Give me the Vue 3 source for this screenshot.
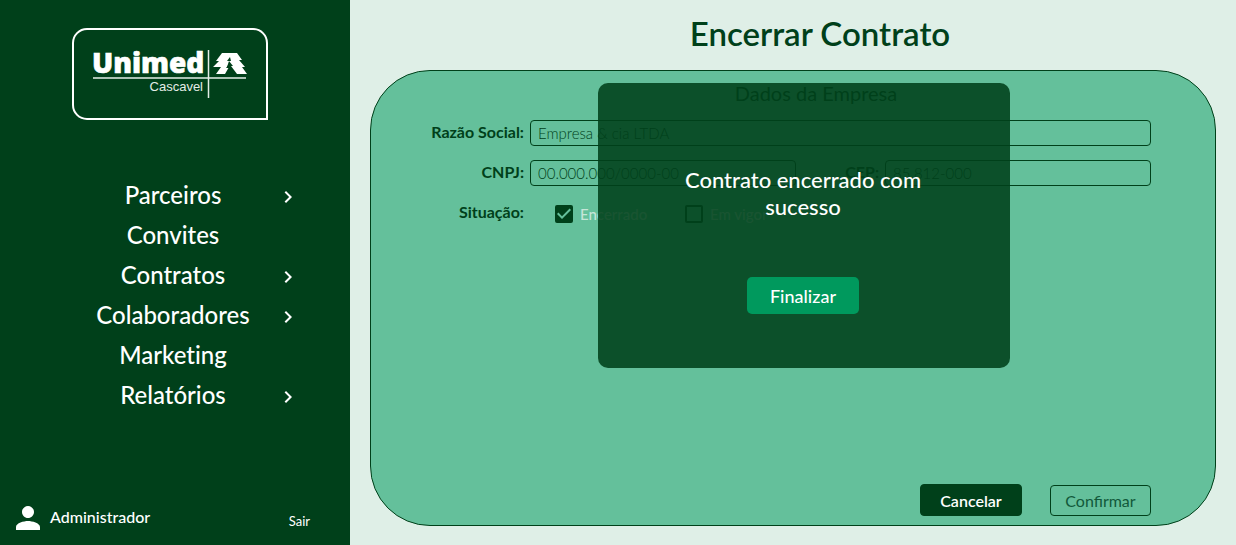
<script setup>
import { ref } from 'vue'

const menu = [
  { label: 'Parceiros', expandable: true },
  { label: 'Convites', expandable: false },
  { label: 'Contratos', expandable: true },
  { label: 'Colaboradores', expandable: true },
  { label: 'Marketing', expandable: false },
  { label: 'Relatórios', expandable: true },
]
const company = ref('Empresa & cia LTDA')
const cnpj = ref('00.000.000/0000-00')
const cep = ref('85.812-000')
const closed = ref(true)
const active = ref(false)
</script>

<template>
  <div class="page">
    <aside class="sidebar">
      <svg class="logo" width="196" height="92" viewBox="0 0 196 92" role="img" aria-label="Unimed Cascavel">
        <path d="M15 1H181A14 14 0 0 1 195 15V91H15A14 14 0 0 1 1 77V15A14 14 0 0 1 15 1Z" fill="none" stroke="#fff" stroke-width="2" />
        <text x="20" y="45" class="logo-name">Unimed</text>
        <text x="131" y="63" text-anchor="end" class="logo-city">Cascavel</text>
        <path d="M21 50H174M136.500 22V70" fill="none" stroke="#e4ede7" stroke-width="1.500" />
        <path d="M150 25H165L170 32H167L173 39H170L175 46H165L159 38H161L157 33L155 39H157L153 46H144L149 39H141L147 33H144Z" fill="#fff" />
        <path d="M158 29L155 33H159ZM157 36L154 40H159Z" fill="#00401a" />
      </svg>
      <nav>
        <ul class="menu">
          <li v-for="item in menu" :key="item.label">
            <a href="#">{{ item.label }}</a>
            <button v-if="item.expandable" type="button" :aria-label="`Abrir ${item.label}`">
              <svg width="24" height="24" viewBox="0 0 24 24"><path fill="#fff" d="M10 6 8.590 7.410 13.170 12l-4.580 4.590L10 18l6-6z" /></svg>
            </button>
          </li>
        </ul>
      </nav>
      <footer class="user">
        <svg width="36" height="36" viewBox="0 0 24 24"><path fill="#fff" d="M12 12c2.210 0 4-1.790 4-4s-1.790-4-4-4-4 1.790-4 4 1.790 4 4 4zm0 2c-2.670 0-8 1.340-8 4v2h16v-2c0-2.660-5.330-4-8-4z" /></svg>
        <span class="user-name">Administrador</span>
        <a href="#" class="exit">Sair</a>
      </footer>
    </aside>

    <main class="main">
      <h1>Encerrar Contrato</h1>
      <section class="panel">
        <form class="form" @submit.prevent>
          <h2>Dados da Empresa</h2>
          <div class="fields">
            <label for="company">Razão Social:</label>
            <input id="company" v-model="company" class="wide" type="text" />
            <label for="cnpj">CNPJ:</label>
            <input id="cnpj" v-model="cnpj" type="text" />
            <label for="cep">CEP:</label>
            <input id="cep" v-model="cep" type="text" />
            <span id="status" class="caption">Situação:</span>
            <div class="checks wide" role="group" aria-labelledby="status">
              <label class="check">
                <input v-model="closed" type="checkbox" />
                <svg v-if="closed" width="18" height="18" viewBox="3 3 18 18"><path fill="#64c09b" d="M10 17l-5-5 1.410-1.410L10 14.170l7.590-7.590L19 8z" /></svg>
                <span>Encerrado</span>
              </label>
              <label class="check">
                <input v-model="active" type="checkbox" />
                <span>Em vigor</span>
              </label>
            </div>
          </div>
          <div class="actions">
            <button type="button" class="cancel">Cancelar</button>
            <button type="submit" class="confirm">Confirmar</button>
          </div>
        </form>
        <div class="modal" role="dialog" aria-labelledby="message">
          <p id="message">Contrato encerrado com sucesso</p>
          <button type="button">Finalizar</button>
        </div>
      </section>
    </main>
  </div>
</template>

<style>
body {
  background: #dfefe7;
}
</style>

<style scoped>
.page, .page * {
  box-sizing: border-box;
}
.page {
  display: flex;
  min-height: 100vh;
  font-family: Lato, sans-serif;
  font-size: 16px;
  color: #00401a;
}
button, input {
  font: inherit;
}
button {
  cursor: pointer;
}
.sidebar {
  flex: 0 0 350px;
  display: flex;
  flex-direction: column;
  background: #00401a;
  color: #fff;
}
.sidebar a {
  color: inherit;
  text-decoration: none;
}
.logo {
  margin: 28px 0 56px 72px;
}
.logo-name {
  font: 800 28px "Open Sans", sans-serif;
  fill: #fff;
  stroke: #fff;
  stroke-width: 0.6;
}
.logo-city {
  font: 13px "Liberation Sans", sans-serif;
  fill: #e4ede7;
}
.menu {
  margin: 0;
  padding: 0 50px 0 70px;
  list-style: none;
  font-variant-ligatures: none;
}
.menu li {
  display: flex;
  align-items: flex-start;
  height: 40px;
}
.menu a {
  flex: 0 0 206px;
  font-size: 24px;
  font-weight: 500;
  line-height: 38px;
  text-align: center;
}
.menu button {
  display: flex;
  padding: 9px 0 0;
  border: 0;
  background: none;
}
.user {
  display: flex;
  align-items: center;
  margin-top: auto;
  padding: 0 40px 9px 10px;
}
.user-name {
  margin-left: 4px;
  padding-bottom: 3px;
  font-weight: 500;
}
.exit {
  margin: 6px 0 0 auto;
  font-size: 13px;
}
.main {
  flex: 1;
  display: flex;
  flex-direction: column;
  min-width: 0;
  padding: 0 20px 19px;
}
h1 {
  margin: 0;
  padding: 0 0 4px 54px;
  font-size: 33px;
  font-weight: 600;
  line-height: 66px;
  text-align: center;
}
.panel {
  position: relative;
  flex: 1;
  display: flex;
  border: 1px solid #00401a;
  border-radius: 60px;
  background: #64c09b;
}
.form {
  flex: 1;
  display: flex;
  flex-direction: column;
  padding: 8px 64px 9px 48px;
}
h2 {
  margin: 0 0 13px;
  padding-left: 62px;
  font-size: 20px;
  font-weight: 400;
  line-height: 28px;
  text-align: center;
}
.fields {
  display: grid;
  grid-template-columns: 105px 1fr 77px 1fr;
  column-gap: 6px;
  row-gap: 14px;
}
.fields > label, .caption {
  font-weight: 700;
  line-height: 24px;
  text-align: right;
}
.wide {
  grid-column: 2 / -1;
}
.fields > input {
  width: 100%;
  min-width: 0;
  height: 26px;
  padding: 0 7px;
  border: 1px solid #00401a;
  border-radius: 4px;
  background: none;
  color: #00401a;
  font-size: 15px;
  font-weight: 300;
}
.checks {
  display: flex;
  height: 28px;
  padding-left: 25px;
}
.check {
  display: grid;
  grid-template-columns: 18px auto;
  align-items: center;
  column-gap: 7px;
  width: 130px;
  color: #dfefe7;
  font-size: 15px;
  font-weight: 500;
}
.check input {
  grid-area: 1 / 1;
  appearance: none;
  width: 18px;
  height: 18px;
  margin: 0;
  border: 2px solid #00401a;
  border-radius: 2px;
}
.check input:checked {
  background: #00401a;
}
.check svg {
  grid-area: 1 / 1;
  z-index: 1;
  pointer-events: none;
}
.check span {
  grid-area: 1 / 2;
  opacity: 0.8;
}
.actions {
  display: flex;
  align-items: center;
  justify-content: flex-end;
  gap: 28px;
  margin-top: auto;
}
.actions button {
  padding: 0;
  border: 1px solid #00401a;
  border-radius: 4px;
}
.cancel {
  width: 102px;
  height: 32px;
  background: #00401a;
  color: #fff;
  font-weight: 600;
}
.confirm {
  width: 101px;
  height: 31px;
  background: none;
  color: #11593a;
}
.modal {
  position: absolute;
  top: 12px;
  left: calc(50% - 195px);
  display: flex;
  flex-direction: column;
  align-items: center;
  width: 412px;
  padding: 83px 71px 54px 69px;
  border-radius: 10px;
  background: rgba(0, 64, 26, 0.88);
  color: #fff;
}
.modal p {
  margin: 0 0 57px;
  font-size: 22px;
  font-weight: 500;
  line-height: 27px;
  text-align: center;
}
.modal button {
  width: 112px;
  height: 37px;
  padding: 0;
  border: 0;
  border-radius: 5px;
  background: #00995d;
  color: #fff;
  font-size: 18px;
  font-weight: 500;
}
</style>
